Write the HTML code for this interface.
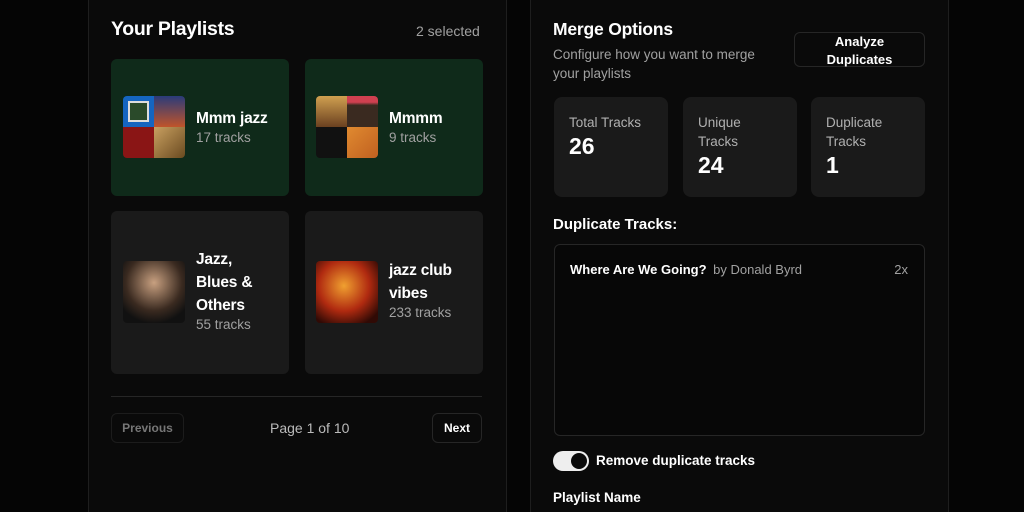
<!DOCTYPE html>
<html style="width:1024px;height:512px;overflow:hidden"><head><meta charset="utf-8"><style>
*{margin:0;padding:0;box-sizing:border-box}
body{width:1024px;height:512px;background:#050505;font-family:"Liberation Sans",sans-serif;color:#fff;position:relative;overflow:hidden}
.a{position:absolute}
.panel{position:absolute;top:-10px;height:540px;background:#0a0a0a;border:1px solid #1e1e1e;border-radius:10px}
.card{position:absolute;width:178px;border-radius:6px;background:#1a1a1a}
.g{background:#0f2a1a}
.art{position:absolute;width:62px;height:62px;border-radius:4px;overflow:hidden}
.t{font-weight:bold;font-size:15.5px;line-height:23px;letter-spacing:-0.2px}
.s{color:#a1a1a1;font-size:13.5px}
.stat{position:absolute;top:97px;width:114px;height:100px;background:#1a1a1a;border-radius:8px}
.stat .l{position:absolute;left:15px;top:16px;color:#b0b0b0;font-size:13.5px;line-height:19px}
.stat .n{font-weight:bold;font-size:23px;color:#fff;line-height:28px}
.btn{position:absolute;border:1px solid #262626;border-radius:6px;background:#0a0a0a;font-weight:bold;font-size:12px;text-align:center}
</style></head><body>
<div class="panel" style="left:88px;width:419px"></div>
<div class="panel" style="left:530px;width:419px"></div>

<div class="a" style="left:111px;top:18px;font-size:19.5px;font-weight:bold;letter-spacing:-0.3px">Your Playlists</div>
<div class="a s" style="left:416px;top:23px;font-size:14px">2 selected</div>

<div class="card g" style="left:111px;top:59px;height:137px">
 <div class="art" style="left:12px;top:37px">
  <div class="a" style="left:0;top:0;width:31px;height:31px;background:#1565c0"><div class="a" style="left:5px;top:5px;width:21px;height:21px;background:#2a4a2a;border:2px solid #ddd"></div></div>
  <div class="a" style="left:31px;top:0;width:31px;height:31px;background:linear-gradient(#2a3b7a,#c0542a)"></div>
  <div class="a" style="left:0;top:31px;width:31px;height:31px;background:#8a1515"></div>
  <div class="a" style="left:31px;top:31px;width:31px;height:31px;background:linear-gradient(135deg,#c9a060,#6a4a20)"></div>
 </div>
 <div class="a" style="left:85px;top:48px"><div class="t">Mmm jazz</div><div class="s">17 tracks</div></div>
</div>
<div class="card g" style="left:305px;top:59px;height:137px">
 <div class="art" style="left:11px;top:37px">
  <div class="a" style="left:0;top:0;width:31px;height:31px;background:linear-gradient(#d0a050,#6a4020)"></div>
  <div class="a" style="left:31px;top:0;width:31px;height:31px;background:linear-gradient(#d04050 20%,#3a2a20 30%)"></div>
  <div class="a" style="left:0;top:31px;width:31px;height:31px;background:#111"></div>
  <div class="a" style="left:31px;top:31px;width:31px;height:31px;background:linear-gradient(135deg,#e08a30,#c06020)"></div>
 </div>
 <div class="a" style="left:84px;top:48px"><div class="t">Mmmm</div><div class="s">9 tracks</div></div>
</div>
<div class="card" style="left:111px;top:211px;height:163px">
 <div class="art" style="left:12px;top:50px;background:radial-gradient(circle at 50% 35%,#c8a080,#3a2a20 55%,#111 80%)"></div>
 <div class="a" style="left:85px;top:37px"><div class="t">Jazz,</div><div class="t">Blues &amp;</div><div class="t">Others</div><div class="s">55 tracks</div></div>
</div>
<div class="card" style="left:305px;top:211px;height:163px">
 <div class="art" style="left:11px;top:50px;background:radial-gradient(circle at 45% 40%,#f0a030,#b02a10 50%,#300a05 85%)"></div>
 <div class="a" style="left:84px;top:48px"><div class="t">jazz club</div><div class="t">vibes</div><div class="s">233 tracks</div></div>
</div>

<div class="a" style="left:111px;top:396px;width:371px;height:1px;background:#262626"></div>
<div class="btn" style="left:111px;top:413px;width:73px;height:30px;line-height:28px;color:#777;border-color:#1c1c1c">Previous</div>
<div class="a" style="left:270px;top:420px;font-size:14px;color:#bbb">Page 1 of 10</div>
<div class="btn" style="left:432px;top:413px;width:50px;height:30px;line-height:28px;color:#fff">Next</div>

<div class="a" style="left:553px;top:19px;font-size:17.5px;font-weight:bold;letter-spacing:-0.2px">Merge Options</div>
<div class="a s" style="left:553px;top:45px;font-size:13.5px;line-height:19px;width:230px;color:#a1a1a1">Configure how you want to merge your playlists</div>
<div class="btn" style="left:794px;top:32px;width:131px;height:35px;line-height:18px;font-size:13px;padding-top:0">Analyze<br>Duplicates</div>

<div class="stat" style="left:554px"><div class="l">Total Tracks<div class="n">26</div></div></div>
<div class="stat" style="left:683px"><div class="l">Unique<br>Tracks<div class="n">24</div></div></div>
<div class="stat" style="left:811px"><div class="l">Duplicate<br>Tracks<div class="n">1</div></div></div>

<div class="a" style="left:553px;top:216px;font-size:15px;font-weight:bold">Duplicate Tracks:</div>
<div class="a" style="left:554px;top:244px;width:371px;height:192px;border:1px solid #262626;border-radius:6px;background:#070707">
 <div class="a" style="left:15px;top:17px;font-size:13px"><b>Where Are We Going?</b> <span style="color:#a1a1a1;margin-left:3px">by Donald Byrd</span></div>
 <div class="a" style="right:16px;top:17px;font-size:13px;color:#a1a1a1">2x</div>
</div>

<div class="a" style="left:553px;top:451px;width:36px;height:20px;border-radius:10px;background:#eee"><div class="a" style="left:18px;top:2px;width:16px;height:16px;border-radius:50%;background:#0a0a0a"></div></div>
<div class="a" style="left:596px;top:453px;font-size:13.5px;font-weight:bold">Remove duplicate tracks</div>
<div class="a" style="left:553px;top:490px;font-size:13.5px;font-weight:bold">Playlist Name</div>
</body></html>
